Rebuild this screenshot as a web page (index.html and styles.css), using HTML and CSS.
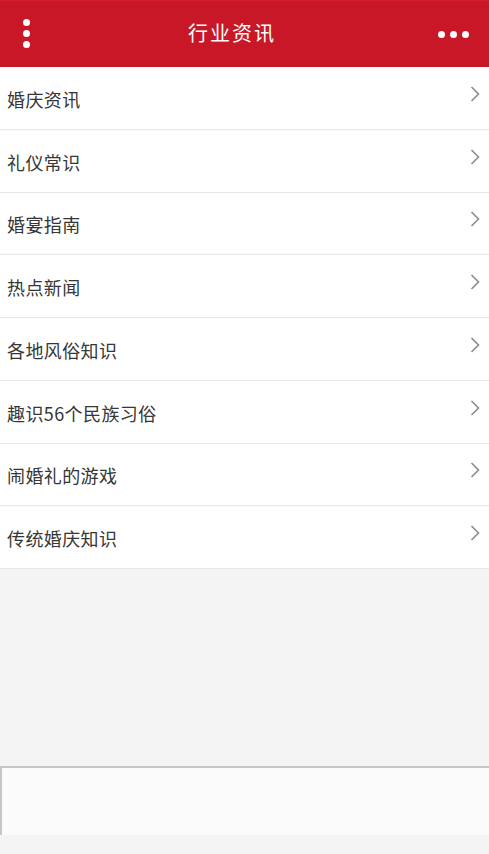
FILE: index.html
```html
<!DOCTYPE html>
<html lang="zh-CN">
<head>
<meta charset="utf-8">
<title>行业资讯</title>
<link rel="stylesheet" href="styles.css">
</head>
<body>
<div class="page">
  <header class="topbar">
    <div class="icon-left">
      <span class="dot"></span><span class="dot"></span><span class="dot"></span>
    </div>
    <h1 class="title">行业资讯</h1>
    <div class="icon-right">
      <span class="dot"></span><span class="dot"></span><span class="dot"></span>
    </div>
  </header>
  <ul class="list">
    <li class="item"><span class="label">婚庆资讯</span><svg class="chev" viewBox="0 0 10 16"><path d="M1.5 1 L8.5 8 L1.5 15"/></svg></li>
    <li class="item"><span class="label">礼仪常识</span><svg class="chev" viewBox="0 0 10 16"><path d="M1.5 1 L8.5 8 L1.5 15"/></svg></li>
    <li class="item"><span class="label">婚宴指南</span><svg class="chev" viewBox="0 0 10 16"><path d="M1.5 1 L8.5 8 L1.5 15"/></svg></li>
    <li class="item"><span class="label">热点新闻</span><svg class="chev" viewBox="0 0 10 16"><path d="M1.5 1 L8.5 8 L1.5 15"/></svg></li>
    <li class="item"><span class="label">各地风俗知识</span><svg class="chev" viewBox="0 0 10 16"><path d="M1.5 1 L8.5 8 L1.5 15"/></svg></li>
    <li class="item"><span class="label">趣识56个民族习俗</span><svg class="chev" viewBox="0 0 10 16"><path d="M1.5 1 L8.5 8 L1.5 15"/></svg></li>
    <li class="item"><span class="label">闹婚礼的游戏</span><svg class="chev" viewBox="0 0 10 16"><path d="M1.5 1 L8.5 8 L1.5 15"/></svg></li>
    <li class="item"><span class="label">传统婚庆知识</span><svg class="chev" viewBox="0 0 10 16"><path d="M1.5 1 L8.5 8 L1.5 15"/></svg></li>
  </ul>
  <div class="spacer"></div>
  <div class="bottom-box"></div>
</div>
</body>
</html>
```
FILE: styles.css
```css
html, body {
  margin: 0;
  padding: 0;
  background: #f4f4f4;
}
body {
  font-family: "Noto Sans CJK SC", "Noto Sans", sans-serif;
  width: 489px;
  height: 854px;
  overflow: hidden;
}
.page {
  display: flex;
  flex-direction: column;
  height: 854px;
}
.topbar {
  height: 67px;
  flex: none;
  background: #c81727;
  border-top: 1px solid #d51d2c;
  box-sizing: border-box;
  display: flex;
  align-items: center;
  padding: 0 20px 0 23px;
}
.icon-left {
  width: 7px;
  display: flex;
  flex-direction: column;
  gap: 4px;
  margin-top: -1px;
}
.icon-right {
  display: flex;
  gap: 5px;
  margin-top: 1px;
}
.dot {
  width: 7px;
  height: 7px;
  border-radius: 50%;
  background: #fff;
  display: block;
}
.title {
  flex: 1;
  margin: 0;
  text-align: center;
  color: #fff;
  font-size: 20px;
  font-weight: 400;
  letter-spacing: 2px;
  padding-right: 4px;
  margin-top: -4px;
}
.list {
  list-style: none;
  margin: 0;
  padding: 0;
  background: #fff;
  flex: none;
}
.item {
  box-sizing: border-box;
  height: 62.75px;
  border-bottom: 1px solid #e6e6e6;
  display: flex;
  align-items: center;
  justify-content: space-between;
  padding: 0 9px 0 7px;
}
.label {
  font-size: 18px;
  font-weight: 400;
  letter-spacing: 0.4px;
  color: #363636;
  margin-top: 2px;
}
.chev {
  width: 10px;
  height: 16px;
  margin-top: -8px;
  fill: none;
  stroke: #8a8a8a;
  stroke-width: 1.6;
}
.spacer {
  flex: none;
  height: 197px;
}
.bottom-box {
  flex: none;
  height: 67px;
  background: #fbfbfb;
  border-top: 2px solid #c6c6c6;
  border-left: 2px solid #c6c6c6;
}
```
